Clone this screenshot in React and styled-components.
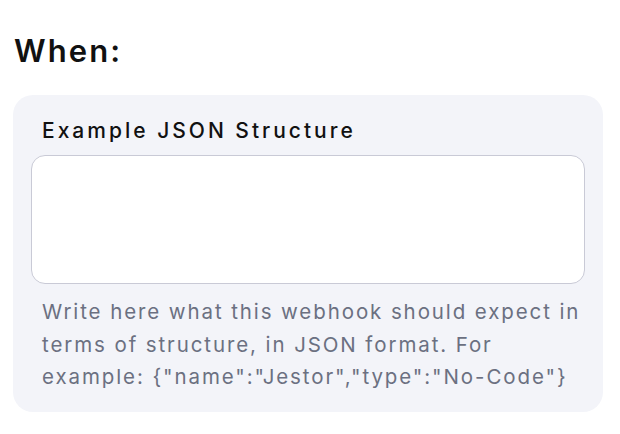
import React from 'react';
import styled, {createGlobalStyle} from "styled-components";

const GlobalStyle = createGlobalStyle`
  body {
    margin: 0;
    background: #ffffff;
    font-family: Inter, "Noto Sans", sans-serif;
  }
`;

const App = () => {
  return (
    <>
      <GlobalStyle/>
      <Page>
        <Title>When:</Title>
        <Card>
          <Label>Example JSON Structure</Label>
          <JsonInput/>
          <Help>
            Write here what this webhook should expect in terms of structure, in JSON format. For
            example: {'{"name":"Jestor","type":"No-Code"}'}
          </Help>
        </Card>
      </Page>
    </>
  );
};

export default App;

const Page = styled.div`
  width: 620px;
  height: 434px;
  padding: 32px 17px 0 13px;
  box-sizing: border-box;
`;

const Title = styled.h1`
  margin: 0 0 25px 1px;
  font-size: 31px;
  line-height: 38px;
  font-weight: 600;
  color: #111111;
  letter-spacing: 2.1px;
`;

const Card = styled.div`
  background: #f3f4f9;
  border-radius: 20px;
  padding: 20px 18px 18px 18px;
  height: 317px;
  box-sizing: border-box;
`;

const Label = styled.div`
  padding-left: 11px;
  font-size: 21px;
  line-height: 32px;
  font-weight: 500;
  color: #111111;
  letter-spacing: 3px;
  margin-bottom: 8px;
`;

const JsonInput = styled.textarea`
  display: block;
  width: 100%;
  height: 129px;
  box-sizing: border-box;
  resize: none;
  background: #ffffff;
  border: 1px solid #c9cad6;
  border-radius: 14px;
  outline: none;
`;

const Help = styled.p`
  margin: 12px 0 0 0;
  padding-left: 11px;
  padding-right: 4px;
  font-size: 20.5px;
  line-height: 32.5px;
  color: #6b7081;
  letter-spacing: 1.9px;
`;
